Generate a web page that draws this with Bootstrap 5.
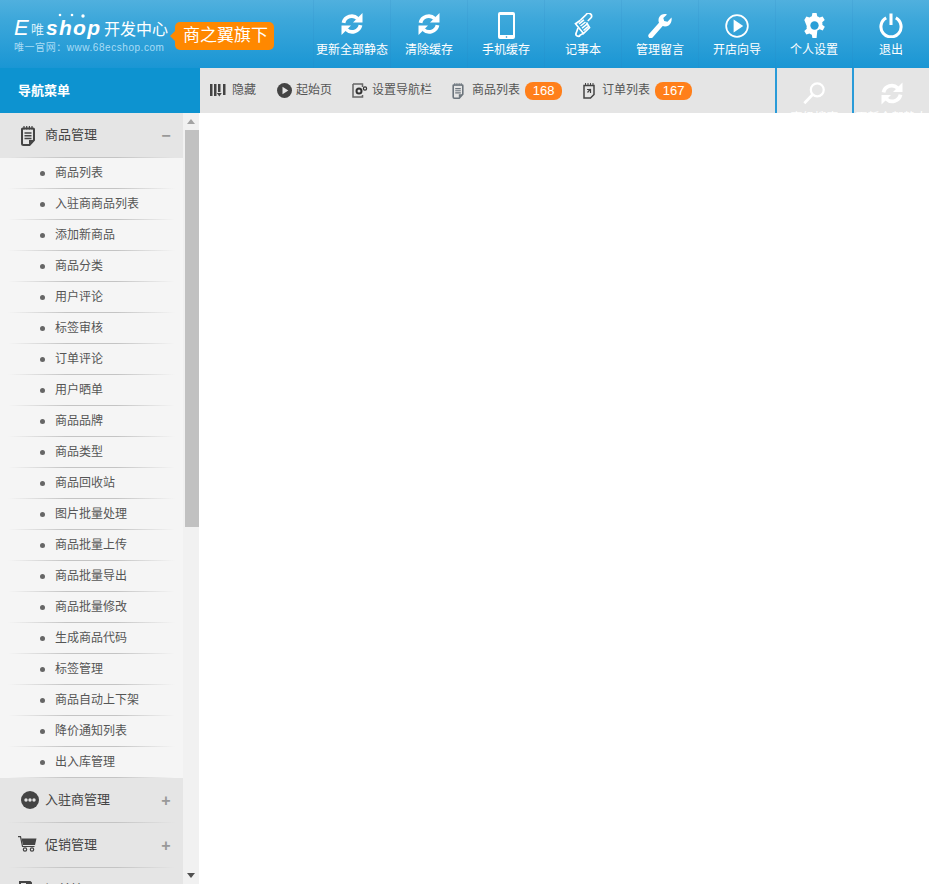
<!DOCTYPE html>
<html lang="zh-CN">
<head>
    <meta charset="UTF-8">
    <meta name="viewport" content="width=device-width, initial-scale=1.0">
    <title>ECShop 开发中心</title>
    <link href="https://cdn.jsdelivr.net/npm/bootstrap@5.3.0/dist/css/bootstrap.min.css" rel="stylesheet">
    <style>
        body { font-family: "Liberation Sans", "Noto Sans CJK SC", sans-serif; font-size: 12px; color: #555; background: #fff; overflow: hidden; }
        .page-wrap { height: 884px; overflow: hidden; }
        .top-bar { height: 68px; background: linear-gradient(#50b0de, #3ca7da 30%, #1a96d4); }
        .logo-area { width: 313px; padding: 18px 0 0 14px; }
        .logo-text { width: 152px; }
        .logo-line { color: #fff; line-height: 20px; height: 20px; white-space: nowrap; }
        .logo-e { display: inline-block; width: 15px; font-size: 22px; font-style: italic; }
        .logo-mid { display: inline-block; width: 17px; font-size: 13px; color: #d9f0fb; text-align: center; vertical-align: 1px; }
        .logo-shop { display: inline-block; width: 58px; font-size: 21px; font-style: italic; font-weight: 700; letter-spacing: 1.3px; }
        .logo-cn { font-size: 16px; }
        .logo-sub { font-size: 10px; color: #a9dcf5; letter-spacing: .55px; line-height: 14px; margin-top: 3px; white-space: nowrap; }
        .logo-tag { position: relative; width: 99px; background: #ff8800; color: #fff; font-size: 17px; line-height: 28px; height: 28px; padding-left: 8px; border-radius: 5px; margin: 4px 0 0 9px; white-space: nowrap; }
        .logo-tag::before { content: ""; position: absolute; left: -5px; top: 9px; border: 5px solid transparent; border-left: 0; border-right-color: #ff8800; }
        .logo-stars { position: absolute; left: 58px; top: 13px; width: 30px; height: 6px; }
        .top-item { width: 77px; height: 68px; padding-top: 12px; color: #fff; text-align: center; border-left: 1px solid rgba(40, 130, 190, .14); line-height: 14px; white-space: nowrap; text-decoration: none; }
        .top-item .top-icon { display: flex; align-items: center; justify-content: center; height: 27px; margin-bottom: 4px; }
        .top-item .ico-up { margin-top: -3px; }
        .second-bar { height: 45px; }
        .menu-title { width: 200px; background: #0d93d0; color: #fff; font-size: 13px; font-weight: 700; line-height: 45px; padding-left: 18px; }
        .tool-bar { background: #e5e5e5; padding-left: 10px; line-height: 45px; color: #555; }
        .tool-link { color: #555; text-decoration: none; white-space: nowrap; }
        .tool-link svg { flex: none; }
        .tool-gap-21 { margin-left: 21px; }
        .tool-gap-20 { margin-left: 20px; }
        .label-gap-6 { margin-left: 6px; }
        .label-gap-7 { margin-left: 7px; }
        .label-gap-8 { margin-left: 8px; }
        .count-pill { background: #ff7f1a; color: #fff; width: 37px; height: 18px; line-height: 18px; border-radius: 8px; text-align: center; font-size: 13px; margin-left: 5px; }
        .side-btn { width: 77px; height: 45px; border-left: 2px solid #2a9bd8; overflow: hidden; color: #fff; text-align: center; padding-top: 12px; line-height: 14px; white-space: nowrap; }
        .side-btn svg { display: block; margin: 0 auto 4px; }
        .side-panel { height: 771px; }
        .menu-col { width: 183px; height: 771px; overflow: hidden; background: #f5f5f5; }
        .group-head { height: 45px; background: #e5e5e5; position: relative; padding-left: 45px; font-size: 13px; line-height: 44px; color: #444; }
        .group-head::after, .sub-item::after { content: ""; position: absolute; left: 8px; right: 8px; bottom: 0; height: 1px; background: linear-gradient(90deg, rgba(190,190,190,0), #c4c4c4 35%, #c4c4c4 65%, rgba(190,190,190,0)); }
        .group-head svg { position: absolute; }
        .ico-goods { left: 21px; top: 13px; color: #444; }
        .ico-dots { left: 21px; top: 13px; }
        .ico-cart { left: 18px; top: 13px; }
        .ico-order { left: 19px; top: 13px; }
        .group-sign { position: absolute; left: 161px; top: 1px; width: 10px; color: #999; font-size: 16px; font-weight: 700; text-align: center; }
        .sub-item { height: 31px; line-height: 30px; position: relative; padding-left: 55px; color: #555; }
        .sub-item::before { content: ""; position: absolute; left: 40px; top: 13px; width: 5px; height: 5px; border-radius: 50%; background: #666; }
        .scroll-col { width: 16px; background: #f1f1f1; }
        .scroll-arrow { height: 17px; }
        .scroll-arrow svg { display: block; margin: 6px auto 0; }
        .scroll-thumb { background: #c1c1c1; height: 397px; margin-left: 2px; width: 14px; }
    </style>
</head>
<body class="m-0">
    <svg width="0" height="0" class="d-block">
        <defs>
            <symbol id="ico-refresh" viewBox="0 0 22 22">
                <path d="M2.500 9.800A8.400 8.400 0 0 1 16.600 5.500" fill="none" stroke="currentColor" stroke-width="3.800"/>
                <path d="M21.500 0v9.500H12z" fill="currentColor"/>
                <path d="M19.500 12.200A8.400 8.400 0 0 1 5.400 16.500" fill="none" stroke="currentColor" stroke-width="3.800"/>
                <path d="M.5 22v-9.500H10z" fill="currentColor"/>
            </symbol>
            <symbol id="ico-note" viewBox="0 0 14 20">
                <path d="M1.800 2.500h10.400a.8.800 0 0 1 .8.800V14l-4.500 5H2.500a1.500 1.500 0 0 1-1.500-1.500V3.300a.8.800 0 0 1 .8-.8z" fill="none" stroke="currentColor" stroke-width="2"/>
                <path d="M3.500 7h7M3.500 9.700h7M3.500 12.400h7" stroke="currentColor" stroke-width="1.500"/>
                <path d="M3 0v3.500M5.700 0v3.500M8.400 0v3.500M11 0v3.500" stroke="currentColor" stroke-width="1.200"/>
                <path d="M8 18.500V14h4.500z" fill="currentColor"/>
            </symbol>
        </defs>
    </svg>
    <div class="page-wrap d-flex flex-column">
        <div class="top-bar d-flex">
            <div class="logo-area d-flex position-relative">
                <div class="logo-text">
                    <div class="logo-stars">
                        <svg width="30" height="6" viewBox="0 0 30 6" class="d-block"><g fill="#fff"><circle cx="2" cy="2" r="1.300"/><circle cx="14" cy="2" r="1.300"/><circle cx="25" cy="3" r="1.700"/></g></svg>
                    </div>
                    <div class="logo-line"><span class="logo-e">E</span><span class="logo-mid">唯</span><span class="logo-shop">shop</span><span class="logo-cn">开发中心</span></div>
                    <div class="logo-sub">唯一官网：www.68ecshop.com</div>
                </div>
                <div class="logo-tag">商之翼旗下</div>
            </div>
            <a class="top-item" href="#">
                <span class="top-icon"><svg width="22" height="22" class="ico-up"><use href="#ico-refresh"/></svg></span>
                更新全部静态
            </a>
            <a class="top-item" href="#">
                <span class="top-icon"><svg width="22" height="22" class="ico-up"><use href="#ico-refresh"/></svg></span>
                清除缓存
            </a>
            <a class="top-item" href="#">
                <span class="top-icon"><svg width="17" height="27" viewBox="0 0 17 27"><path fill-rule="evenodd" fill="#fff" d="M2 0h13a2 2 0 0 1 2 2v23a2 2 0 0 1-2 2H2a2 2 0 0 1-2-2V2a2 2 0 0 1 2-2zM2 3v20h13V3z"/><circle cx="8.500" cy="25" r=".8" fill="#1a96d4"/></svg></span>
                手机缓存
            </a>
            <a class="top-item" href="#">
                <span class="top-icon"><svg width="19" height="25" viewBox="0 0 19 25"><g fill="none" stroke="#fff" stroke-width="1.700"><path d="M6.500 7.200L12.200 1.500a2.700 2.700 0 0 1 4.800 3.300L13.800 8"/><path d="M6.500 7.200L1.500 10.700 9.500 20.500 15.500 14.500 12.500 9.500"/><path d="M4 15l-1.800 5a2.200 2.200 0 0 0 4 2l3-1.600"/></g><path d="M5 10.800l5-4M6.500 13l5-4M8 15.200l5-4M9.500 17.500l4.500-3.800" stroke="#fff" stroke-width="1.600"/></svg></span>
                记事本
            </a>
            <a class="top-item" href="#">
                <span class="top-icon"><svg width="24" height="24" viewBox="0 0 24 24"><path fill="#fff" d="M23.500 3.500l-4 4.300-3.300-.7-.9-3.200L19 .5c-3-1-6.300-.1-7.700 2.500-1.100 2-1 4-.3 5.800L.8 20.200c-.9 1.100-.7 2.600.3 3.500 1 .9 2.600.9 3.500-.2l10.100-11.400c1.900.6 4.100.5 5.900-.7 2.500-1.700 3.500-5 2.900-7.900z"/></svg></span>
                管理留言
            </a>
            <a class="top-item" href="#">
                <span class="top-icon"><svg width="24" height="24" viewBox="0 0 25 25"><circle cx="12.500" cy="12.500" r="11.300" fill="none" stroke="#fff" stroke-width="1.800"/><path fill="#fff" d="M9 5.800l10 6.700-10 6.700z"/></svg></span>
                开店向导
            </a>
            <a class="top-item" href="#">
                <span class="top-icon"><svg width="25" height="25" viewBox="0 0 24 24"><path fill="#fff" d="M10 0h4l.6 3.200c.8.300 1.500.7 2.200 1.200l3-1.100 2 3.400-2.400 2.100c.1.400.2.800.2 1.200s0 .8-.1 1.200l2.400 2.100-2 3.400-3-1.100c-.7.500-1.400.9-2.200 1.200L14 24h-4l-.6-3.200c-.8-.3-1.500-.7-2.200-1.200l-3 1.100-2-3.400 2.400-2.100c-.1-.4-.2-.8-.2-1.200s.1-.8.200-1.200L2.200 6.700l2-3.400 3 1.100c.7-.5 1.400-.9 2.200-1.200z"/><circle cx="12" cy="12" r="4" fill="#2a9fd8"/></svg></span>
                个人设置
            </a>
            <a class="top-item" href="#">
                <span class="top-icon"><svg width="24" height="25" viewBox="0 0 25 25"><path d="M7.500 4.600a10.500 10.500 0 1 0 10 0" fill="none" stroke="#fff" stroke-width="3.200"/><path d="M12.500 0v12" stroke="#fff" stroke-width="3.200"/></svg></span>
                退出
            </a>
        </div>
        <div class="second-bar d-flex">
            <div class="menu-title">导航菜单</div>
            <div class="tool-bar flex-grow-1 d-flex">
                <a class="tool-link d-flex align-items-center" href="#">
                    <svg width="16" height="14" viewBox="0 0 16 14"><path fill="#444" d="M0 0h2.500v12H0zM4 0h2.500v12H4zM8 0h2.500v8H8zM6.800 9h5l-2.500 3.500zM13 0h2.500v11H13z"/></svg>
                    <span class="label-gap-6">隐藏</span>
                </a>
                <a class="tool-link tool-gap-21 d-flex align-items-center" href="#">
                    <svg width="15" height="15" viewBox="0 0 15 15"><circle cx="7.500" cy="7.500" r="7.500" fill="#444"/><path d="M5.500 3.800l5.800 3.700-5.800 3.700z" fill="#e5e5e5"/></svg>
                    <span class="ms-1">起始页</span>
                </a>
                <a class="tool-link tool-gap-20 d-flex align-items-center" href="#">
                    <svg width="16" height="15" viewBox="0 0 16 15"><path d="M1 1h9.500v3M1 1v13h9.500v-2" fill="none" stroke="#666" stroke-width="1.500"/><circle cx="7" cy="8" r="2.500" fill="none" stroke="#333" stroke-width="2"/><circle cx="13" cy="5.500" r="1.600" fill="none" stroke="#333" stroke-width="1.200"/></svg>
                    <span class="ms-1">设置导航栏</span>
                </a>
                <a class="tool-link tool-gap-20 d-flex align-items-center" href="#">
                    <svg width="12" height="16" class="text-secondary"><use href="#ico-note"/></svg>
                    <span class="label-gap-8">商品列表</span>
                    <span class="count-pill">168</span>
                </a>
                <a class="tool-link tool-gap-21 d-flex align-items-center" href="#">
                    <svg width="12" height="16" viewBox="0 0 12 16"><path d="M1 2.500h10v9l-3.500 3.500H1z" fill="none" stroke="#444" stroke-width="1.500"/><path d="M2.500 0v3M5 0v3M7.500 0v3M10 0v3" stroke="#444"/><path d="M7.500 6l-3 3.500M4 6.500h3.500V10" fill="none" stroke="#444" stroke-width="1.200"/></svg>
                    <span class="label-gap-7">订单列表</span>
                    <span class="count-pill">167</span>
                </a>
                <div class="side-btn ms-auto">
                    <svg width="25" height="27" viewBox="0 0 27 27"><circle cx="16.500" cy="9.500" r="7" fill="none" stroke="#fff" stroke-width="2.400"/><path d="M11.500 14.500L2.500 24" stroke="#fff" stroke-width="3"/></svg>
                    高级搜索
                </div>
                <div class="side-btn">
                    <svg width="22" height="27"><use href="#ico-refresh"/></svg>
                    更新全部静态
                </div>
            </div>
        </div>
        <div class="side-panel d-flex">
            <div class="menu-col" id="side-menu"></div>
            <div class="scroll-col d-flex flex-column">
                <div class="scroll-arrow"><svg width="8" height="5"><path d="M4 0l4 5H0z" fill="#a3a3a3"/></svg></div>
                <div class="scroll-thumb"></div>
                <div class="flex-grow-1"></div>
                <div class="scroll-arrow"><svg width="8" height="5"><path d="M0 0h8L4 5z" fill="#505050"/></svg></div>
            </div>
            <div class="flex-grow-1 bg-white"></div>
        </div>
    </div>

    <script>
        const goodsItems = ['商品列表', '入驻商商品列表', '添加新商品', '商品分类', '用户评论', '标签审核', '订单评论', '用户晒单', '商品品牌', '商品类型', '商品回收站', '图片批量处理', '商品批量上传', '商品批量导出', '商品批量修改', '生成商品代码', '标签管理', '商品自动上下架', '降价通知列表', '出入库管理'];
        const menu = document.getElementById('side-menu');

        function groupHead(name, sign, icon) {
            return `<div class="group-head">${icon}${name}<span class="group-sign">${sign}</span></div>`;
        }

        const noteIcon = '<svg width="14" height="20" class="ico-goods"><use href="#ico-note"/></svg>';
        const dotsIcon = '<svg width="18" height="18" viewBox="0 0 18 18" class="ico-dots"><circle cx="9" cy="9" r="9" fill="#444"/><circle cx="5" cy="9" r="1.700" fill="#e5e5e5"/><circle cx="9" cy="9" r="1.700" fill="#e5e5e5"/><circle cx="13" cy="9" r="1.700" fill="#e5e5e5"/></svg>';
        const cartIcon = '<svg width="19" height="16" viewBox="0 0 19 16" class="ico-cart"><path d="M0 .7h2.500l2 9.800h12" fill="none" stroke="#444" stroke-width="1.200"/><path d="M3.500 2.500h15l-1.500 6.500H5z" fill="#444"/><circle cx="7" cy="13.500" r="1.700" fill="none" stroke="#444" stroke-width="1.200"/><circle cx="14" cy="13.500" r="1.700" fill="none" stroke="#444" stroke-width="1.200"/></svg>';
        const boxIcon = '<svg width="18" height="18" viewBox="0 0 18 18" class="ico-order"><path d="M1 1h7v7H1zM10 0l2 2v6h-2z" fill="none" stroke="#444" stroke-width="2"/></svg>';

        let html = groupHead('商品管理', '−', noteIcon);
        goodsItems.forEach(item => {
            html += `<div class="sub-item">${item}</div>`;
        });
        html += groupHead('入驻商管理', '+', dotsIcon);
        html += groupHead('促销管理', '+', cartIcon);
        html += groupHead('订单管理', '+', boxIcon);
        menu.innerHTML = html;
    </script>
</body>
</html>
